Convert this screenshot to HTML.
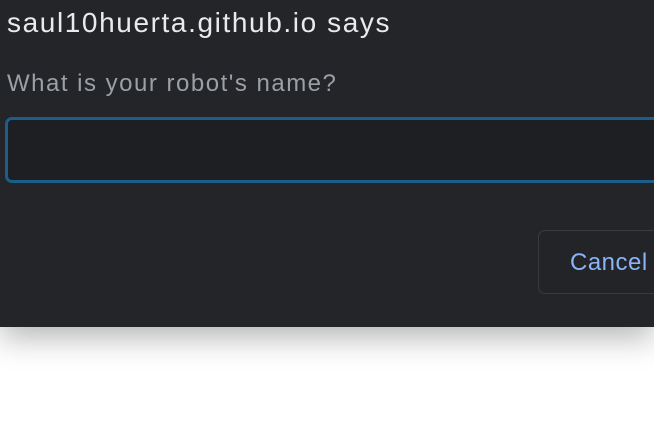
<html><head><style>
body{margin:0;width:654px;height:426px;background:#fff;overflow:hidden;position:relative;font-family:"Liberation Sans",sans-serif}
.d{position:absolute;left:0;top:0;width:654px;height:327px;background:#242529;box-shadow:0 10px 30px rgba(0,0,0,.3)}
.t{position:absolute;left:7px;top:7px;font-size:28px;letter-spacing:1.6px;color:#e8eaed}
.l{position:absolute;left:7px;top:70px;font-size:24px;letter-spacing:1.5px;color:#9aa0a6}
.i{position:absolute;left:5px;top:117px;width:670px;height:60px;border:3px solid #1b5e8a;border-radius:7px;background:#1e1f23}
.b{position:absolute;left:538px;top:230px;width:140px;height:62px;border:1px solid #3a3b3f;border-radius:7px;background:#232428}
.b span{position:absolute;left:31px;top:18px;font-size:24px;letter-spacing:0.5px;color:#8ab4f8}
</style></head><body>
<div class="d">
<div class="t">saul10huerta.github.io says</div>
<div class="l">What is your robot's name?</div>
<div class="i"></div>
<div class="b"><span>Cancel</span></div>
</div>
</body></html>
